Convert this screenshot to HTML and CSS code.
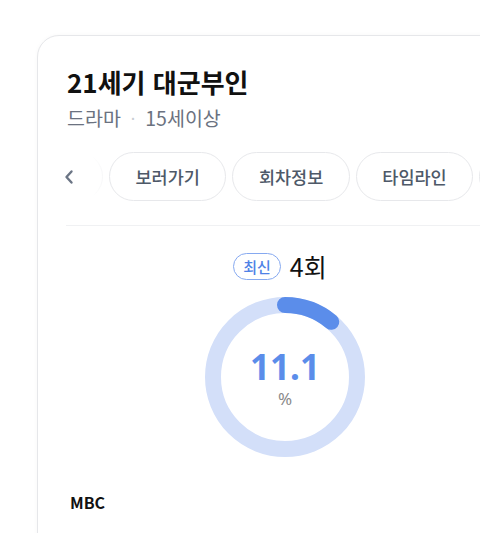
FILE: index.html
```html
<!DOCTYPE html>
<html lang="ko">
<head>
<meta charset="utf-8">
<link rel="stylesheet" href="styles.css">
</head>
<body>
<div class="card">
  <div class="head">
    <h1 class="title">21세기 대군부인</h1>
    <div class="meta"><span>드라마</span><span class="dot">·</span><span>15세이상</span></div>
  </div>
  <div class="tabs">
    <button class="prev" aria-label="이전">
      <svg width="12" height="16" viewBox="0 0 12 16"><path d="M8.5 2.5 L3.5 8 L8.5 13.5" fill="none" stroke="#6b7585" stroke-width="2.4" stroke-linecap="round" stroke-linejoin="round"/></svg>
    </button>
    <div class="track">
      <div class="pills">
        <span class="pill ghost"></span>
        <span class="pill">보러가기</span>
        <span class="pill">회차정보</span>
        <span class="pill">타임라인</span>
        <span class="pill ghost"></span>
      </div>
      <div class="fade"></div>
    </div>
  </div>
  <div class="divider"></div>
  <div class="rating">
    <div class="ep"><span class="badge">최신</span><span class="epno">4회</span></div>
    <div class="ring">
      <svg width="160" height="160" viewBox="0 0 160 160">
        <circle cx="80" cy="80" r="72" fill="none" stroke="#d3dff9" stroke-width="16"/>
        <circle cx="80" cy="80" r="72" fill="none" stroke="#5b8dea" stroke-width="16" stroke-linecap="round" stroke-dasharray="50.2 452.4" transform="rotate(-90 80 80)"/>
      </svg>
      <div class="value"><span class="num">11.1</span><span class="unit">%</span></div>
    </div>
  </div>
  <div class="channel">MBC</div>
</div>
</body>
</html>
```
FILE: styles.css
```css
html, body {
  margin: 0;
  padding: 0;
  background: #fff;
  overflow: hidden;
  width: 480px;
  height: 533px;
}
body {
  font-family: "Noto Sans CJK KR", "Noto Sans", sans-serif;
  color: #111;
}
.card {
  margin: 35px 0 0 37px;
  width: 496px;
  box-sizing: border-box;
  border: 1px solid #e6e7ea;
  border-radius: 22px;
  padding: 29px 28px 80px 28px;
  background: #fff;
  box-shadow: 0 0 4px rgba(0,0,0,0.03);
}
.head {
  padding: 0 0 0 1px;
}
.title {
  margin: 0;
  font-size: 26px;
  font-weight: 700;
  line-height: 34px;
  color: #111;
}
.meta {
  margin-top: 6px;
  font-size: 19.5px;
  line-height: 26px;
  color: #6b7280;
  display: flex;
  align-items: center;
  gap: 10px;
}
.meta .dot {
  color: #c8ccd2;
  font-size: 16px;
}
.tabs {
  margin-top: 21px;
  display: flex;
  align-items: center;
  margin-left: -4px;
}
.prev {
  border: 0;
  background: none;
  padding: 0;
  width: 14px;
  height: 49px;
  display: flex;
  align-items: center;
  justify-content: center;
}
.track {
  position: relative;
  flex: 1;
  overflow: hidden;
  margin-left: 10px;
}
.pills {
  display: flex;
  gap: 6px;
  margin-left: -43px;
}
.pill {
  flex: none;
  height: 49px;
  box-sizing: border-box;
  border: 1px solid #e7e8eb;
  border-radius: 25px;
  padding: 0 25.5px;
  display: flex;
  align-items: center;
  font-size: 17.5px;
  font-weight: 500;
  color: #4e5968;
  background: #fff;
}
.pill.ghost {
  width: 60px;
}
.fade {
  position: absolute;
  left: 0;
  top: 0;
  width: 22px;
  height: 100%;
  background: linear-gradient(to right, #fff 30%, rgba(255,255,255,0.5));
}
.divider {
  margin-top: 24px;
  height: 1px;
  background: #f0f1f3;
}
.rating {
  display: flex;
  flex-direction: column;
  align-items: center;
  padding-top: 25px;
}
.ep {
  display: flex;
  align-items: center;
  gap: 9px;
  margin-left: -10px;
}
.badge {
  border: 1px solid #86a9f0;
  border-radius: 14px;
  color: #4f82e6;
  font-size: 15px;
  font-weight: 500;
  line-height: 25px;
  padding: 0 9px;
}
.epno {
  font-size: 25px;
  line-height: 30px;
  color: #111;
}
.ring {
  position: relative;
  margin-top: 16px;
  width: 160px;
  height: 160px;
}
.ring svg {
  display: block;
}
.value {
  position: absolute;
  inset: 0;
  display: flex;
  flex-direction: column;
  align-items: center;
  padding-top: 51px;
}
.num {
  font-family: "Noto Sans", sans-serif;
  font-size: 35px;
  font-weight: 700;
  line-height: 38px;
  color: #5b8dea;
}
.unit {
  font-family: "Noto Sans", sans-serif;
  font-size: 17px;
  line-height: 20px;
  color: #8a8a8a;
  margin-top: 3px;
}
.channel {
  margin-top: 33px;
  margin-left: 4px;
  font-size: 16px;
  font-weight: 700;
  color: #111;
}
```
